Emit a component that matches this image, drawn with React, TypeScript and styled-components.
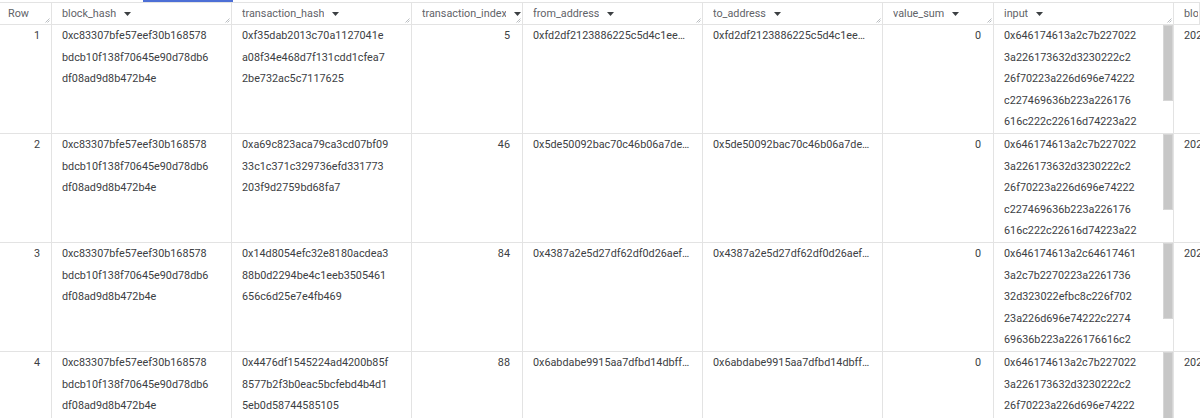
import styled, { createGlobalStyle } from "styled-components";

const GlobalStyle = createGlobalStyle`
  body {
    margin: 0;
    background: #ffffff;
    overflow: hidden;
    font-family: Roboto, "Noto Sans", Arial, sans-serif;
  }
`;

type RowData = {
  blockHash: string[];
  txHash: string[];
  txIndex: number;
  from: string;
  to: string;
  value: number;
  input: string[];
  timestamp: string;
};

const blockHash = [
  "0xc83307bfe57eef30b168578",
  "bdcb10f138f70645e90d78db6",
  "df08ad9d8b472b4e",
];

// only the part of the input that fits in the cell is shown
const mintInput = [
  "0x646174613a2c7b227022",
  "3a226173632d3230222c2",
  "26f70223a226d696e74222",
  "c227469636b223a226176",
  "616c222c22616d74223a22",
];

// addresses come already shortened, the way the grid shows them
const rows: RowData[] = [
  {
    blockHash,
    txHash: ["0xf35dab2013c70a1127041e", "a08f34e468d7f131cdd1cfea7", "2be732ac5c7117625"],
    txIndex: 5,
    from: "0xfd2df2123886225c5d4c1ee…",
    to: "0xfd2df2123886225c5d4c1ee…",
    value: 0,
    input: mintInput,
    timestamp: "202",
  },
  {
    blockHash,
    txHash: ["0xa69c823aca79ca3cd07bf09", "33c1c371c329736efd331773", "203f9d2759bd68fa7"],
    txIndex: 46,
    from: "0x5de50092bac70c46b06a7de…",
    to: "0x5de50092bac70c46b06a7de…",
    value: 0,
    input: mintInput,
    timestamp: "202",
  },
  {
    blockHash,
    txHash: ["0x14d8054efc32e8180acdea3", "88b0d2294be4c1eeb3505461", "656c6d25e7e4fb469"],
    txIndex: 84,
    from: "0x4387a2e5d27df62df0d26aef…",
    to: "0x4387a2e5d27df62df0d26aef…",
    value: 0,
    input: [
      "0x646174613a2c64617461",
      "3a2c7b2270223a2261736",
      "32d323022efbc8c226f702",
      "23a226d696e74222c2274",
      "69636b223a226176616c2",
    ],
    timestamp: "202",
  },
  {
    blockHash,
    txHash: ["0x4476df1545224ad4200b85f", "8577b2f3b0eac5bcfebd4b4d1", "5eb0d58744585105"],
    txIndex: 88,
    from: "0x6abdabe9915aa7dfbd14dbff…",
    to: "0x6abdabe9915aa7dfbd14dbff…",
    value: 0,
    input: mintInput,
    timestamp: "202",
  },
];

const columns = [
  "block_hash",
  "transaction_hash",
  "transaction_index",
  "from_address",
  "to_address",
  "value_sum",
  "input",
];

function SortArrow() {
  return (
    <Arrow width="7" height="4" viewBox="0 0 7 4">
      <polygon points="0,0 7,0 3.5,4" fill="#3c4043" />
    </Arrow>
  );
}

function ResizeGrip() {
  return (
    <Grip width="5" height="5" viewBox="0 0 5 5">
      <line x1="0.5" y1="4.5" x2="4.5" y2="0.5" stroke="#a8adb2" strokeWidth="0.8" />
      <line x1="2.5" y1="4.5" x2="4.5" y2="2.5" stroke="#a8adb2" strokeWidth="0.8" />
    </Grip>
  );
}

function App() {
  return (
    <Page>
      <GlobalStyle />
      <TabStrip>
        <TabIndicator />
      </TabStrip>
      <Table>
        <HeaderCell>
          <HeaderLabel>Row</HeaderLabel>
          <ResizeGrip />
        </HeaderCell>
        {columns.map((c) => (
          <HeaderCell key={c}>
            <HeaderLabel>{c}</HeaderLabel>
            <SortArrow />
            <ResizeGrip />
          </HeaderCell>
        ))}
        <HeaderCell>
          <HeaderLabel>blo</HeaderLabel>
        </HeaderCell>

        {rows.map((r, i) => (
          <RowGroup key={i}>
            <Cell $align="right" $padRight={11}>
              {i + 1}
            </Cell>
            <Cell>
              {r.blockHash.map((l) => (
                <Line key={l}>{l}</Line>
              ))}
            </Cell>
            <Cell>
              {r.txHash.map((l) => (
                <Line key={l}>{l}</Line>
              ))}
            </Cell>
            <Cell $align="right">{r.txIndex}</Cell>
            <Cell>
              <Line>{r.from}</Line>
            </Cell>
            <Cell>
              <Line>{r.to}</Line>
            </Cell>
            <Cell $align="right">{r.value}</Cell>
            <InputCell>
              <InputText>
                {r.input.map((l, k) => (
                  <Line key={k}>{l}</Line>
                ))}
              </InputText>
              <ScrollTrack>
                <ScrollThumb />
              </ScrollTrack>
            </InputCell>
            <Cell>
              <Line>{r.timestamp}</Line>
            </Cell>
          </RowGroup>
        ))}
      </Table>
    </Page>
  );
}

export default App;

const Page = styled.div`
  width: 1200px;
  height: 418px;
  overflow: hidden;
  background: #ffffff;
`;

const TabStrip = styled.div`
  height: 2px;
  display: flex;
`;

const TabIndicator = styled.div`
  margin-left: 143px;
  width: 90px;
  height: 2px;
  background: #4d6fd6;
`;

const Table = styled.div`
  display: grid;
  grid-template-columns: 52px 180px 180px 111px 180px 180px 111px 180px 26px;
  width: 1200px;
  border-top: 1px solid #e3e3e3;
  color: #3c4043;
  font-size: 10.8px;
`;

const RowGroup = styled.div`
  display: contents;
`;

const HeaderCell = styled.div`
  position: relative;
  box-sizing: border-box;
  height: 22px;
  display: flex;
  align-items: center;
  padding: 0 1px 0 10px;
  border-right: 1px solid #e3e3e3;
  border-bottom: 1px solid #e3e3e3;
  overflow: hidden;

  &:first-child {
    padding-left: 8px;
  }

  &:last-child {
    border-right: none;
  }
`;

const HeaderLabel = styled.span`
  color: #5f6368;
  white-space: nowrap;
  overflow: hidden;
  min-width: 0;
`;

const Arrow = styled.svg`
  flex-shrink: 0;
  margin-left: 8px;
  margin-top: 1px;
`;

const Grip = styled.svg`
  position: absolute;
  right: 1px;
  bottom: 1px;
`;

const Cell = styled.div<{ $align?: "left" | "right"; $padRight?: number }>`
  box-sizing: border-box;
  height: 109px;
  padding: 0 ${(p) => p.$padRight ?? 12}px 0 10px;
  text-align: ${(p) => p.$align ?? "left"};
  line-height: 21.6px;
  border-right: 1px solid #e3e3e3;
  border-bottom: 1px solid #e3e3e3;
  overflow: hidden;
  white-space: nowrap;

  &:first-child {
    padding-left: 8px;
  }

  &:last-child {
    border-right: none;
    padding-right: 0;
  }
`;

const Line = styled.div`
  white-space: nowrap;
`;

const InputCell = styled.div`
  box-sizing: border-box;
  height: 109px;
  display: flex;
  padding-left: 10px;
  line-height: 21.6px;
  border-right: 1px solid #e3e3e3;
  border-bottom: 1px solid #e3e3e3;
  overflow: hidden;
`;

const InputText = styled.div`
  flex: 1;
  min-width: 0;
  overflow: hidden;
`;

const ScrollTrack = styled.div`
  width: 10px;
  flex-shrink: 0;
`;

const ScrollThumb = styled.div`
  height: 76px;
  background: #c7c7c7;
  box-shadow: inset 0 0 0 1px #d6d6d6;
`;
